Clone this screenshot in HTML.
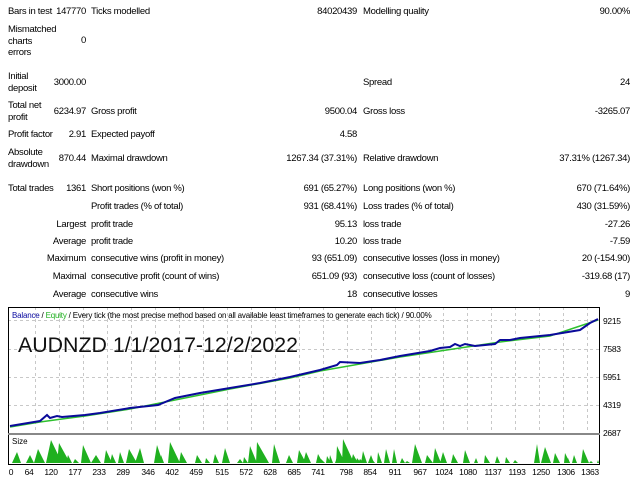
<!DOCTYPE html>
<html><head><meta charset="utf-8"><style>
body{margin:0;width:640px;height:480px;background:#fff;font-family:"Liberation Sans",sans-serif;font-size:9.5px;letter-spacing:-0.3px;color:#000;position:relative;overflow:hidden}
.t{position:absolute;line-height:11.5px;white-space:nowrap}
.r{text-align:right}
</style></head><body>
<div class="t" style="left:8px;top:6px">Bars in test</div><div class="t r" style="right:554px;top:6px">147770</div>
<div class="t" style="left:91px;top:6px">Ticks modelled</div><div class="t r" style="right:283px;top:6px">84020439</div>
<div class="t" style="left:363px;top:6px">Modelling quality</div><div class="t r" style="right:10px;top:6px">90.00%</div>

<div class="t" style="left:8px;top:24px">Mismatched<br>charts<br>errors</div><div class="t r" style="right:554px;top:35px">0</div>

<div class="t" style="left:8px;top:71px">Initial<br>deposit</div><div class="t r" style="right:554px;top:77px">3000.00</div>
<div class="t" style="left:363px;top:77px">Spread</div><div class="t r" style="right:10px;top:77px">24</div>

<div class="t" style="left:8px;top:100px">Total net<br>profit</div><div class="t r" style="right:554px;top:106px">6234.97</div>
<div class="t" style="left:91px;top:106px">Gross profit</div><div class="t r" style="right:283px;top:106px">9500.04</div>
<div class="t" style="left:363px;top:106px">Gross loss</div><div class="t r" style="right:10px;top:106px">-3265.07</div>

<div class="t" style="left:8px;top:129px">Profit factor</div><div class="t r" style="right:554px;top:129px">2.91</div>
<div class="t" style="left:91px;top:129px">Expected payoff</div><div class="t r" style="right:283px;top:129px">4.58</div>

<div class="t" style="left:8px;top:147px">Absolute<br>drawdown</div><div class="t r" style="right:554px;top:153px">870.44</div>
<div class="t" style="left:91px;top:153px">Maximal drawdown</div><div class="t r" style="right:283px;top:153px">1267.34 (37.31%)</div>
<div class="t" style="left:363px;top:153px">Relative drawdown</div><div class="t r" style="right:10px;top:153px">37.31% (1267.34)</div>

<div class="t" style="left:8px;top:183px">Total trades</div><div class="t r" style="right:554px;top:183px">1361</div>
<div class="t" style="left:91px;top:183px">Short positions (won %)</div><div class="t r" style="right:283px;top:183px">691 (65.27%)</div>
<div class="t" style="left:363px;top:183px">Long positions (won %)</div><div class="t r" style="right:10px;top:183px">670 (71.64%)</div>

<div class="t" style="left:91px;top:201px">Profit trades (% of total)</div><div class="t r" style="right:283px;top:201px">931 (68.41%)</div>
<div class="t" style="left:363px;top:201px">Loss trades (% of total)</div><div class="t r" style="right:10px;top:201px">430 (31.59%)</div>

<div class="t r" style="right:554px;top:219px">Largest</div><div class="t" style="left:91px;top:219px">profit trade</div><div class="t r" style="right:283px;top:219px">95.13</div>
<div class="t" style="left:363px;top:219px">loss trade</div><div class="t r" style="right:10px;top:219px">-27.26</div>

<div class="t r" style="right:554px;top:236px">Average</div><div class="t" style="left:91px;top:236px">profit trade</div><div class="t r" style="right:283px;top:236px">10.20</div>
<div class="t" style="left:363px;top:236px">loss trade</div><div class="t r" style="right:10px;top:236px">-7.59</div>

<div class="t r" style="right:554px;top:253px">Maximum</div><div class="t" style="left:91px;top:253px">consecutive wins (profit in money)</div><div class="t r" style="right:283px;top:253px">93 (651.09)</div>
<div class="t" style="left:363px;top:253px">consecutive losses (loss in money)</div><div class="t r" style="right:10px;top:253px">20 (-154.90)</div>

<div class="t r" style="right:554px;top:271px">Maximal</div><div class="t" style="left:91px;top:271px">consecutive profit (count of wins)</div><div class="t r" style="right:283px;top:271px">651.09 (93)</div>
<div class="t" style="left:363px;top:271px">consecutive loss (count of losses)</div><div class="t r" style="right:10px;top:271px">-319.68 (17)</div>

<div class="t r" style="right:554px;top:289px">Average</div><div class="t" style="left:91px;top:289px">consecutive wins</div><div class="t r" style="right:283px;top:289px">18</div>
<div class="t" style="left:363px;top:289px">consecutive losses</div><div class="t r" style="right:10px;top:289px">9</div>

<svg style="position:absolute;left:0;top:0;letter-spacing:0" width="640" height="480">
<g stroke="#c8c8c8" stroke-dasharray="3,3" stroke-width="1">
<line x1="8" y1="320.5" x2="599" y2="320.5"/><line x1="8" y1="349.5" x2="599" y2="349.5"/><line x1="8" y1="377.5" x2="599" y2="377.5"/><line x1="8" y1="405.5" x2="599" y2="405.5"/>
<line x1="35.5" y1="307" x2="35.5" y2="433"/><line x1="59.5" y1="307" x2="59.5" y2="433"/><line x1="83.5" y1="307" x2="83.5" y2="433"/><line x1="107.5" y1="307" x2="107.5" y2="433"/><line x1="131.5" y1="307" x2="131.5" y2="433"/><line x1="155.5" y1="307" x2="155.5" y2="433"/><line x1="179.5" y1="307" x2="179.5" y2="433"/><line x1="203.5" y1="307" x2="203.5" y2="433"/><line x1="227.5" y1="307" x2="227.5" y2="433"/><line x1="251.5" y1="307" x2="251.5" y2="433"/><line x1="275.5" y1="307" x2="275.5" y2="433"/><line x1="299.5" y1="307" x2="299.5" y2="433"/><line x1="323.5" y1="307" x2="323.5" y2="433"/><line x1="347.5" y1="307" x2="347.5" y2="433"/><line x1="371.5" y1="307" x2="371.5" y2="433"/><line x1="395.5" y1="307" x2="395.5" y2="433"/><line x1="419.5" y1="307" x2="419.5" y2="433"/><line x1="443.5" y1="307" x2="443.5" y2="433"/><line x1="467.5" y1="307" x2="467.5" y2="433"/><line x1="491.5" y1="307" x2="491.5" y2="433"/><line x1="515.5" y1="307" x2="515.5" y2="433"/><line x1="539.5" y1="307" x2="539.5" y2="433"/><line x1="563.5" y1="307" x2="563.5" y2="433"/><line x1="587.5" y1="307" x2="587.5" y2="433"/>
</g>
<rect x="8.5" y="307.5" width="591" height="126" fill="none" stroke="#000"/>
<rect x="8.5" y="434.5" width="591" height="30" fill="none" stroke="#000"/>
<line x1="8" y1="434" x2="600" y2="434" stroke="#888" stroke-width="2"/>
<polyline fill="none" stroke="#2ec02e" stroke-width="1.5" points="10,427 40,422 62,419 85,416 130,409 175,400 230,389 290,378 320,371 400,357 460,348 500,342 550,336 598,320"/>
<polyline fill="none" stroke="#0a0a9a" stroke-width="2" points="10,426 40,421 47,415 50,418 57,416 62,417 85,415 100,413 130,408 158,405 175,398 200,393 230,388 260,383 290,377 320,370 337,365 340,362 360,363 380,360 400,356 430,351 440,348 450,347 455,344 460,346 465,344 475,346 495,344 500,340 510,340 520,338 550,335 580,330 590,323 598,319"/>
<g fill="#1fb01f">
<path d="M12,463 L17,452 L21,463Z M26,463 L30,455 L34,463Z M34,463 L38,449 L45,463Z M46,463 L51,440 L62,463Z M57,463 L59,443 L70,463Z M81,463 L83,445 L91,463Z M91,463 L96,455 L101,463Z M104,463 L106,450 L112,463Z M126,463 L129,449 L137,463Z M135,463 L140,448 L144,463Z M154,463 L157,445 L163,463Z M168,463 L170,442 L180,463Z M179,463 L181,452 L187,463Z M205,463 L206,458 L210,463Z M213,463 L215,454 L219,463Z M222,463 L225,448 L230,463Z M237,463 L240,459 L243,463Z M248,463 L250,446 L257,463Z M256,463 L257,442 L269,463Z M272,463 L274,444 L280,463Z M286,463 L289,455 L293,463Z M297,463 L299,450 L306,463Z M303,463 L306,452 L311,463Z M329,463 L330,455 L333,463Z M335,463 L337,457 L340,463Z M345,463 L347,459 L350,463Z M352,463 L354,456 L357,463Z M361,463 L363,451 L367,463Z M368,463 L371,455 L374,463Z M377,463 L378,452 L382,463Z M384,463 L386,449 L390,463Z M392,463 L394,449 L397,463Z M400,463 L402,458 L405,463Z M412,463 L415,444 L422,463Z M433,463 L435,448 L441,463Z M440,463 L443,452 L447,463Z M451,463 L453,455 L456,463Z M463,463 L465,450 L470,463Z M474,463 L476,458 L478,463Z M484,463 L485,455 L490,463Z M495,463 L497,456 L500,463Z M505,463 L506,457 L510,463Z M513,463 L515,460 L518,463Z M534,463 L537,444 L540,463Z M564,463 L565,453 L570,463Z M589,463 L591,461 L593,463Z"/>
<path d="M336,463 L337,446 L345,463Z M342,463 L343,439 L354,463Z M351,463 L353,454 L358,463Z M452,463 L453,454 L458,463Z"/>
<path d="M326,463 L327,456 L331,463Z M356,463 L357,458 L361,463Z M316,463 L318,454 L323,463Z M320,463 L321,459 L325,463Z M358,463 L360,459 L364,463Z M370,463 L371,458 L375,463Z M405,463 L407,461 L410,463Z M425,463 L427,455 L433,463Z M541,463 L545,447 L551,463Z M553,463 L555,453 L560,463Z M566,463 L568,458 L570,463Z M572,463 L574,455 L577,463Z M581,463 L583,449 L589,463Z M597,463 L598,460 L599,463Z M243,463 L244,457 L248,463Z M195,463 L197,455 L202,463Z M110,463 L112,454 L116,463Z M118,463 L120,452 L124,463Z M160,463 L161,455 L164,463Z M73,463 L75,459 L79,463Z M66,463 L68,455 L72,463Z"/>
</g>
<text x="12" y="318" font-size="8" font-family="Liberation Sans,sans-serif" letter-spacing="-0.2"><tspan fill="#0a0aa0">Balance</tspan><tspan fill="#000"> / </tspan><tspan fill="#1fb01f">Equity</tspan><tspan fill="#000"> / Every tick (the most precise method based on all available least timeframes to generate each tick) / 90.00%</tspan></text>
<text x="18" y="352" font-size="21" font-family="Liberation Sans,sans-serif" fill="#111" textLength="280" lengthAdjust="spacingAndGlyphs">AUDNZD 1/1/2017-12/2/2022</text>
<text x="12" y="444" font-size="8" font-family="Liberation Sans,sans-serif">Size</text>
<g font-size="8.5" font-family="Liberation Sans,sans-serif" fill="#000" letter-spacing="-0.3">
<text x="603" y="324">9215</text><text x="603" y="352">7583</text><text x="603" y="380">5951</text><text x="603" y="408">4319</text><text x="603" y="436">2687</text>
</g>
<g font-size="8.5" font-family="Liberation Sans,sans-serif" fill="#000" text-anchor="middle" letter-spacing="-0.3">
<text x="11" y="475">0</text><text x="29" y="475">64</text><text x="51" y="475">120</text><text x="75" y="475">177</text><text x="99" y="475">233</text><text x="123" y="475">289</text><text x="148" y="475">346</text><text x="172" y="475">402</text><text x="196" y="475">459</text><text x="222" y="475">515</text><text x="246" y="475">572</text><text x="270" y="475">628</text><text x="294" y="475">685</text><text x="318" y="475">741</text><text x="346" y="475">798</text><text x="370" y="475">854</text><text x="395" y="475">911</text><text x="420" y="475">967</text><text x="444" y="475">1024</text><text x="468" y="475">1080</text><text x="493" y="475">1137</text><text x="517" y="475">1193</text><text x="541" y="475">1250</text><text x="566" y="475">1306</text><text x="590" y="475">1363</text>
</g>
</svg>
</body></html>
